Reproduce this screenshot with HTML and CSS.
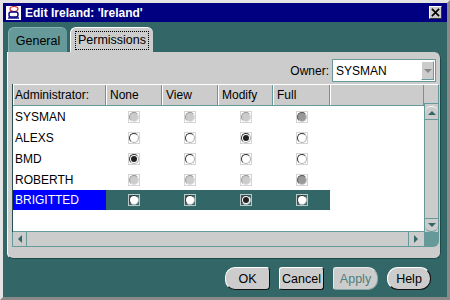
FILE: index.html
```html
<!DOCTYPE html>
<html lang="en">
<head>
    <meta charset="UTF-8">
    <title>Edit Ireland</title>
    <link rel="stylesheet" href="styles.css">
</head>
<body>
    <div class="window">
        <div class="titlebar">
            <svg class="app-icon" viewBox="0 0 17 16">
                <rect x="0.5" y="0.5" width="16" height="15" fill="#fff" stroke="#000080"/>
                <ellipse cx="9" cy="4" rx="4" ry="2.5" fill="none" stroke="#d02020" stroke-width="1.2"/>
                <rect x="4" y="7" width="9" height="5" rx="2" fill="none" stroke="#000080" stroke-width="1.4"/>
                <path d="M3 13 H14" stroke="#000080" stroke-width="1.4"/>
            </svg>
            <span class="title">Edit Ireland: 'Ireland'</span>
            <span class="close-btn">
                <svg viewBox="0 0 10 10" width="9" height="9"><path d="M1 1 L9 9 M9 1 L1 9" stroke="#000" stroke-width="1.8"/></svg>
            </span>
        </div>

        <div class="content">
            <div class="tabs">
                <div class="tab">General</div>
                <div class="tab active"><span class="tab-label">Permissions</span></div>
            </div>

            <div class="panel">
                <div class="owner-row">
                    <span class="owner-label">Owner:</span>
                    <div class="combo">
                        <span class="combo-text">SYSMAN</span>
                        <span class="combo-btn"><span class="arrow-down"></span></span>
                    </div>
                </div>

                <div class="table">
                    <div class="table-main">
                        <div class="table-body">
                            <div class="row header">
                                <div class="cell name">Administrator:</div>
                                <div class="cell c1">None</div>
                                <div class="cell c2">View</div>
                                <div class="cell c3">Modify</div>
                                <div class="cell c4">Full</div>
                                <div class="cell rest"></div>
                            </div>
                            <div class="rows">
                                <div class="row">
                                    <div class="cell name">SYSMAN</div>
                                    <div class="cell c1"><span class="rb-box"><span class="rb dis"></span></span></div>
                                    <div class="cell c2"><span class="rb-box"><span class="rb dis"></span></span></div>
                                    <div class="cell c3"><span class="rb-box"><span class="rb dis"></span></span></div>
                                    <div class="cell c4"><span class="rb-box"><span class="rb dis on"></span></span></div>
                                </div>
                                <div class="row">
                                    <div class="cell name">ALEXS</div>
                                    <div class="cell c1"><span class="rb-box"><span class="rb"></span></span></div>
                                    <div class="cell c2"><span class="rb-box"><span class="rb"></span></span></div>
                                    <div class="cell c3"><span class="rb-box"><span class="rb on"></span></span></div>
                                    <div class="cell c4"><span class="rb-box"><span class="rb"></span></span></div>
                                </div>
                                <div class="row">
                                    <div class="cell name">BMD</div>
                                    <div class="cell c1"><span class="rb-box"><span class="rb on"></span></span></div>
                                    <div class="cell c2"><span class="rb-box"><span class="rb"></span></span></div>
                                    <div class="cell c3"><span class="rb-box"><span class="rb"></span></span></div>
                                    <div class="cell c4"><span class="rb-box"><span class="rb"></span></span></div>
                                </div>
                                <div class="row">
                                    <div class="cell name">ROBERTH</div>
                                    <div class="cell c1"><span class="rb-box"><span class="rb dis"></span></span></div>
                                    <div class="cell c2"><span class="rb-box"><span class="rb dis"></span></span></div>
                                    <div class="cell c3"><span class="rb-box"><span class="rb dis"></span></span></div>
                                    <div class="cell c4"><span class="rb-box"><span class="rb dis on"></span></span></div>
                                </div>
                                <div class="row selected">
                                    <div class="cell name">BRIGITTED</div>
                                    <div class="cell c1"><span class="rb-box"><span class="rb"></span></span></div>
                                    <div class="cell c2"><span class="rb-box"><span class="rb"></span></span></div>
                                    <div class="cell c3"><span class="rb-box"><span class="rb on"></span></span></div>
                                    <div class="cell c4"><span class="rb-box"><span class="rb"></span></span></div>
                                </div>
                            </div>
                        </div>
                        <div class="vscroll">
                            <div class="vscroll-head"></div>
                            <div class="vscroll-track">
                                <span class="sb-btn up"><span class="arrow-up"></span></span>
                                <span class="sb-btn down"><span class="arrow-down teal"></span></span>
                            </div>
                        </div>
                    </div>
                    <div class="hscroll-row">
                        <div class="hscroll">
                            <span class="sb-btn left"><span class="arrow-left"></span></span>
                            <span class="sb-btn right"><span class="arrow-right"></span></span>
                        </div>
                        <div class="corner"></div>
                    </div>
                </div>
            </div>

            <div class="buttons">
                <button class="btn ok">OK</button>
                <button class="btn cancel">Cancel</button>
                <button class="btn apply" disabled>Apply</button>
                <button class="btn help">Help</button>
            </div>
        </div>
    </div>
</body>
</html>
```

FILE: styles.css
```css
body {
    margin: 0;
    font-family: "Liberation Sans", Arial, sans-serif;
    font-size: 12px;
    color: #000;
}

.window {
    width: 450px;
    height: 300px;
    box-sizing: border-box;
    border: 3px solid #d0d0d0;
    border-color: #e4e4e4 #8a8a8a #8a8a8a #e4e4e4;
    background-color: #336666;
    display: flex;
    flex-direction: column;
}

/* Barre de titre */
.titlebar {
    height: 19px;
    flex-shrink: 0;
    background-color: #000080;
    display: flex;
    align-items: center;
    padding: 0 5px 0 2px;
    color: white;
}

.app-icon {
    width: 17px;
    height: 16px;
    margin-right: 3px;
}

.title {
    flex: 1;
    font-weight: bold;
    font-size: 12px;
}

.close-btn {
    width: 11px;
    height: 11px;
    background-color: #cccccc;
    border: 1px solid;
    border-color: #ffffff #333333 #333333 #ffffff;
    display: flex;
    align-items: center;
    justify-content: center;
}

.content {
    flex: 1;
    display: flex;
    flex-direction: column;
    padding: 5px 6px 7px 4px;
}

/* Onglets */
.tabs {
    display: flex;
    gap: 3px;
    height: 25px;
    margin-left: 1px;
}

.tab {
    box-sizing: border-box;
    width: 59px;
    padding-top: 6px;
    text-align: center;
    font-size: 12.5px;
    background-color: #669999;
    border-radius: 6px 6px 0 0;
    border-top: 1px solid #88b3b3;
    border-left: 1px solid #88b3b3;
}

.tab.active {
    width: 83px;
    padding-top: 5px;
    background-color: #cccccc;
    border-top: 1px solid #ffffff;
    border-left: 1px solid #ffffff;
}

.tab-label {
    border: 1px dotted #000;
    padding: 1px 2px 2px 2px;
}

.panel {
    height: 207px;
    box-sizing: border-box;
    background-color: #cccccc;
    border-radius: 0 6px 6px 6px;
    border-left: 1px solid #ffffff;
    border-bottom: 1px solid #1f4a4a;
    border-right: 1px solid #1f4a4a;
    padding: 7px 1px 0 4px;
    display: flex;
    flex-direction: column;
}

.owner-row {
    display: flex;
    justify-content: flex-end;
    align-items: center;
    gap: 3px;
    height: 23px;
    padding-right: 3px;
}

.combo {
    width: 104px;
    height: 23px;
    box-sizing: border-box;
    border: 1px solid #669999;
    background-color: white;
    display: flex;
    align-items: center;
}

.combo-text {
    flex: 1;
    padding-left: 3px;
}

.combo-btn {
    width: 13px;
    height: 19px;
    margin-right: 1px;
    background-color: #cccccc;
    border: 1px solid;
    border-color: #ffffff #669999 #669999 #ffffff;
    box-sizing: border-box;
    display: flex;
    align-items: center;
    justify-content: center;
}

.arrow-down {
    width: 0;
    height: 0;
    border-left: 4px solid transparent;
    border-right: 4px solid transparent;
    border-top: 4px solid #888888;
}

.arrow-down.teal {
    border-top-color: #336666;
}

.arrow-up {
    width: 0;
    height: 0;
    border-left: 4px solid transparent;
    border-right: 4px solid transparent;
    border-bottom: 4px solid #336666;
}

.arrow-left {
    width: 0;
    height: 0;
    border-top: 4px solid transparent;
    border-bottom: 4px solid transparent;
    border-right: 4px solid #336666;
}

.arrow-right {
    width: 0;
    height: 0;
    border-top: 4px solid transparent;
    border-bottom: 4px solid transparent;
    border-left: 4px solid #336666;
}

/* Tableau */
.table {
    margin-top: 2px;
    width: 427px;
    height: 163px;
    display: flex;
    flex-direction: column;
}

.table-main {
    flex: 1;
    display: flex;
}

.table-body {
    width: 412px;
    display: flex;
    flex-direction: column;
    border-left: 1px solid #2a4f4f;
    box-sizing: border-box;
}

.row {
    display: flex;
    height: 21px;
    align-items: stretch;
}

.cell {
    box-sizing: border-box;
    display: flex;
    align-items: center;
    justify-content: center;
}

.cell.name { width: 93px; justify-content: flex-start; padding-left: 2px; }
.cell.c1 { width: 56px; }
.cell.c2 { width: 56px; }
.cell.c3 { width: 55px; }
.cell.c4 { width: 57px; }
.cell.rest { flex: 1; }

.row.header {
    height: 20px;
    background-color: #cccccc;
    border-top: 1px solid #ffffff;
    border-bottom: 1px solid #669999;
}

.row.header .cell {
    justify-content: flex-start;
    padding-left: 4px;
    border-right: 1px solid #669999;
    box-shadow: inset 1px 0 #ffffff;
}

.row.header .cell.name {
    padding-left: 2px;
}

.rows {
    flex: 1;
    background-color: white;
    border-bottom: 1px solid #669999;
}

.row.selected {
    height: 20px;
}

.row.selected .cell {
    background-color: #336666;
}

.row.selected .cell.name {
    background-color: #0000ff;
    color: white;
}

/* Boutons radio */
.rb-box {
    width: 10px;
    height: 10px;
    border: 1px solid #d4d4d4;
    display: flex;
}

.row.selected .rb-box {
    border-color: #b8c8c8;
}

.rb {
    width: 10px;
    height: 10px;
    box-sizing: border-box;
    border-radius: 50%;
    border: 1px solid;
    border-color: #333333 #b0b0b0 #b0b0b0 #333333;
    background-color: white;
    display: flex;
    align-items: center;
    justify-content: center;
}

.rb.dis {
    background-color: #cccccc;
    border-color: #999999 #e0e0e0 #e0e0e0 #999999;
}

.rb.dis.on {
    background-color: #999999;
    border-color: #555555 #cccccc #cccccc #555555;
}

.rb.on:not(.dis)::after {
    content: "";
    width: 6px;
    height: 6px;
    border-radius: 50%;
    background-color: #222222;
}

/* Barres de défilement */
.vscroll {
    width: 15px;
    display: flex;
    flex-direction: column;
}

.vscroll-head {
    height: 20px;
    box-sizing: border-box;
    background-color: #cccccc;
    border-top: 1px solid #ffffff;
    border-bottom: 1px solid #669999;
    border-right: 1px solid #669999;
}

.vscroll-track {
    flex: 1;
    background-color: #cccccc;
    border-left: 1px solid #669999;
    border-right: 1px solid #669999;
    display: flex;
    flex-direction: column;
    justify-content: space-between;
    padding: 2px 0 0 0;
}

.sb-btn {
    box-sizing: border-box;
    background-color: #cccccc;
    display: flex;
    align-items: center;
    justify-content: center;
}

.sb-btn.up {
    height: 14px;
    border-radius: 6px 6px 0 0;
    border-top: 1px solid #ffffff;
    border-bottom: 1px solid #669999;
}

.sb-btn.down {
    height: 14px;
    border-radius: 0 0 6px 6px;
    border-top: 1px solid #669999;
    border-bottom: 1px solid #669999;
}

.hscroll-row {
    height: 15px;
    display: flex;
}

.hscroll {
    width: 412px;
    box-sizing: border-box;
    background-color: #cccccc;
    border-left: 1px solid #669999;
    border-bottom: 1px solid #669999;
    display: flex;
    justify-content: space-between;
    padding-right: 2px;
}

.sb-btn.left {
    width: 14px;
    border-radius: 6px 0 0 6px;
    border-right: 1px solid #669999;
}

.sb-btn.right {
    width: 14px;
    border-radius: 0 6px 6px 0;
    border-left: 1px solid #669999;
}

.corner {
    width: 15px;
    background-color: #669999;
    border-radius: 0 0 6px 0;
}

/* Boutons du bas */
.buttons {
    display: flex;
    justify-content: flex-end;
    gap: 9px;
    margin-top: 8px;
    padding-right: 10px;
}

.btn {
    width: 45px;
    height: 23px;
    padding: 0;
    font-family: "Liberation Sans", Arial, sans-serif;
    font-size: 12.5px;
    color: #000;
    background-color: #cccccc;
    border: 1px solid;
    border-color: #ffffff #111111 #111111 #ffffff;
    border-radius: 3px;
}

.btn.ok {
    border-radius: 10px 4px 4px 10px;
}

.btn.apply {
    color: #4f7f7f;
    border-color: #e8e8e8 #88a8a8 #88a8a8 #e8e8e8;
    border-radius: 3px 10px 10px 3px;
}

.btn.help {
    width: 44px;
    border-radius: 11px;
}
```
